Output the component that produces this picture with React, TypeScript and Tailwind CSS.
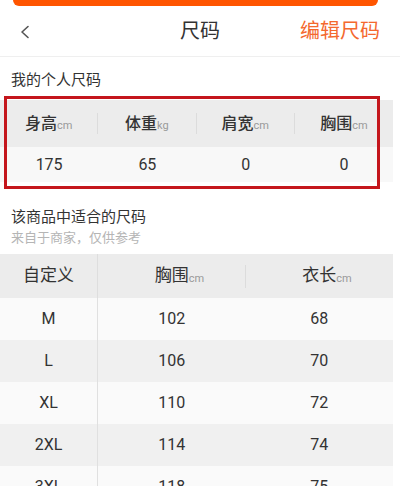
import React from 'react';

const font = { fontFamily: "Roboto, 'Noto Sans CJK SC', sans-serif" };

const mine = [
  { label: '身高', unit: 'cm', value: '175' },
  { label: '体重', unit: 'kg', value: '65' },
  { label: '肩宽', unit: 'cm', value: '0' },
  { label: '胸围', unit: 'cm', value: '0' },
];

const sizes = [
  { size: 'M', chest: '102', length: '68' },
  { size: 'L', chest: '106', length: '70' },
  { size: 'XL', chest: '110', length: '72' },
  { size: '2XL', chest: '114', length: '74' },
  { size: '3XL', chest: '118', length: '75' },
];

function HeadCell({ label, unit }: { label: string; unit: string }) {
  // main text stays centred, unit hangs off the right side
  return (
    <span className="relative text-[17px] text-[#333]">
      {label}
      <span className="absolute left-full bottom-[5px] text-[11px] leading-none text-[#999]">{unit}</span>
    </span>
  );
}

export default function App() {
  return (
    <div className="w-[400px] h-[486px] overflow-hidden bg-white relative" style={font}>
      {/* orange bar left from the previous sheet */}
      <div className="mx-[13px] w-[365px] h-[6px] rounded-b-[10px] bg-[#ff5500]" />

      {/* Header */}
      <div className="h-[51px] border-b border-[#efefef] flex items-center justify-between pl-[19px] pr-[20px] relative">
        <svg width="12" height="14" viewBox="0 0 12 14" className="mt-[1px]">
          <polyline points="9,1.5 3,7 9,12.5" fill="none" stroke="#555" strokeWidth="1.6" strokeLinecap="round" strokeLinejoin="round" />
        </svg>
        <span className="absolute left-1/2 -translate-x-1/2 text-[20px] text-[#333]">尺码</span>
        <span className="text-[20px] text-[#f4692e]">编辑尺码</span>
      </div>

      {/* My sizes */}
      <div className="pl-[11px] pt-[12px] text-[15px] leading-[22px] text-[#333]">我的个人尺码</div>
      <div className="mt-[9px] w-[393px]">
        <div className="grid grid-cols-4 h-[47px] bg-[#ececec] items-center">
          {mine.map((m, i) => (
            <div key={m.label} className={`flex justify-center items-baseline h-[21px] ${i < 3 ? 'border-r border-[#dcdcdc]' : ''}`}>
              <span className="text-[16px] font-medium leading-[21px] text-[#333]">{m.label}</span>
              <span className="text-[11px] leading-[15px] text-[#999]">{m.unit}</span>
            </div>
          ))}
        </div>
        <div className="grid grid-cols-4 h-[35px] bg-[#f8f8f8] items-center">
          {mine.map((m) => (
            <div key={m.label} className="text-center text-[16px] text-[#333]">{m.value}</div>
          ))}
        </div>
      </div>
      {/* red annotation frame */}
      <div className="absolute left-[4px] top-[96px] w-[376px] h-[93px] border-[3px] border-[#c4161c]" />

      {/* Suitable sizes */}
      <div className="pl-[11px] pt-[24px] text-[15px] leading-[22px] text-[#333]">该商品中适合的尺码</div>
      <div className="pl-[11px] text-[13px] leading-[20px] text-[#b5b5b5]">来自于商家，仅供参考</div>
      <div className="mt-[6px] w-[393px]">
        <div className="grid grid-cols-[98px_1fr_1fr] h-[44px] bg-[#ececec]">
          <div className="flex items-center justify-center border-r border-[#dedede] text-[17px] text-[#333]">自定义</div>
          <div className="flex items-center justify-center relative">
            <HeadCell label="胸围" unit="cm" />
            <div className="absolute right-0 top-[11px] h-[23px] border-r border-[#dcdcdc]" />
          </div>
          <div className="flex items-center justify-center">
            <HeadCell label="衣长" unit="cm" />
          </div>
        </div>
        {sizes.map((s, i) => (
          <div key={s.size} className={`grid grid-cols-[98px_1fr_1fr] h-[42px] text-[16px] text-[#333] ${i % 2 ? 'bg-[#f0f0f0]' : 'bg-[#fafafa]'}`}>
            <div className="flex items-center justify-center border-r border-[#e0e0e0]">{s.size}</div>
            <div className="flex items-center justify-center">{s.chest}</div>
            <div className="flex items-center justify-center">{s.length}</div>
          </div>
        ))}
      </div>
    </div>
  );
}
